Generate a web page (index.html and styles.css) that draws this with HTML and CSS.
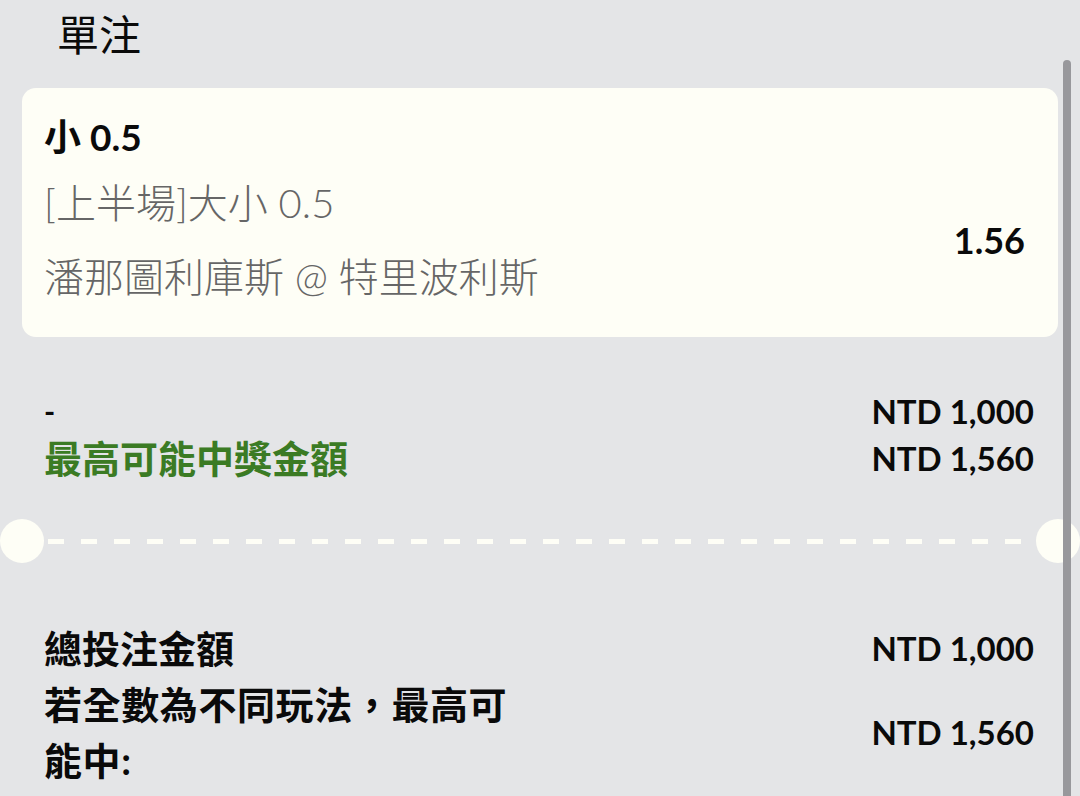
FILE: index.html
```html
<!DOCTYPE html>
<html lang="zh-Hant">

<head>
  <meta charset="UTF-8">
  <meta name="viewport" content="width=device-width, initial-scale=1.0">
  <title>單注</title>
  <link rel="stylesheet" href="styles.css">
</head>

<body>
  <div class="slip">
    <h2 class="slip-title">單注</h2>

    <div class="bet-card">
      <div class="bet-pick">小 0.5</div>
      <div class="bet-market">[上半場]大小 0.5</div>
      <div class="bet-match">潘那圖利庫斯 @ 特里波利斯</div>
      <div class="bet-odds">1.56</div>
    </div>

    <div class="stake">
      <div class="stake-row">
        <span class="stake-input">-</span>
        <span class="amount">NTD 1,000</span>
      </div>
      <div class="stake-row">
        <span class="win-label">最高可能中獎金額</span>
        <span class="amount">NTD 1,560</span>
      </div>
    </div>

    <div class="ticket-cut">
      <span class="notch"></span>
      <span class="dash-line"></span>
      <span class="notch"></span>
    </div>

    <div class="totals">
      <span class="total-label">總投注金額</span>
      <span class="amount">NTD 1,000</span>
      <span class="total-label wrap">若全數為不同玩法，最高可能中:</span>
      <span class="amount middle">NTD 1,560</span>
    </div>

    <div class="scrollbar"></div>
  </div>
</body>

</html>
```

FILE: styles.css
```css
body {
  margin: 0;
  padding: 0;
  background-color: #e4e5e7;
  font-family: Lato, 'Noto Sans CJK TC', sans-serif;
  color: #0a0a0a;
  overflow: hidden;
}

.slip {
  position: relative;
  height: 796px;
  padding: 0 22px;
}

.slip-title {
  margin: 0;
  padding-left: 35px;
  font-size: 42px;
  font-weight: 400;
  line-height: 70px;
}

.bet-card {
  margin-top: 18px;
  background-color: #fefef6;
  border-radius: 14px;
  padding: 24px 33px 27px 22px;
  display: grid;
  grid-template-columns: 1fr auto;
  row-gap: 8px;
}

.bet-pick {
  grid-column: 1 / 3;
  font-size: 37px;
  font-weight: 700;
  line-height: 50px;
}

.bet-market,
.bet-match {
  grid-column: 1;
  font-size: 40px;
  font-weight: 300;
  color: #666666;
  line-height: 66px;
}

.bet-odds {
  grid-column: 2;
  grid-row: 2 / 4;
  align-self: center;
  font-size: 36px;
  font-weight: 700;
}

.stake {
  margin-top: 50px;
  padding: 0 24px 0 22px;
}

.stake-row {
  display: flex;
  justify-content: space-between;
  align-items: center;
  line-height: 46px;
}

.stake-row:first-child {
  line-height: 48px;
}

.stake-input {
  font-size: 30px;
  font-weight: 700;
}

.win-label {
  font-size: 38px;
  font-weight: 700;
  color: #3b7b24;
}

.amount {
  font-size: 33px;
  font-weight: 700;
}

.ticket-cut {
  margin: 38px -22px 0;
  display: flex;
  align-items: center;
}

.notch {
  width: 44px;
  height: 44px;
  border-radius: 50%;
  background-color: #fefef6;
  flex: none;
}

.dash-line {
  flex: 1;
  height: 5px;
  margin: 0 4px;
  background: repeating-linear-gradient(to right, #fefef6 0 16px, transparent 16px 33px);
}

.totals {
  margin-top: 57px;
  padding: 0 24px 0 22px;
  display: grid;
  grid-template-columns: 1fr auto;
  align-items: center;
}

.total-label {
  font-size: 38px;
  font-weight: 700;
  line-height: 56px;
}

.total-label.wrap {
  max-width: 480px;
  letter-spacing: 0.6px;
}

.amount.middle {
  align-self: center;
}

.scrollbar {
  position: absolute;
  top: 60px;
  right: 9px;
  bottom: 0;
  width: 8px;
  border-radius: 4px 4px 0 0;
  background-color: #98989c;
}
```
